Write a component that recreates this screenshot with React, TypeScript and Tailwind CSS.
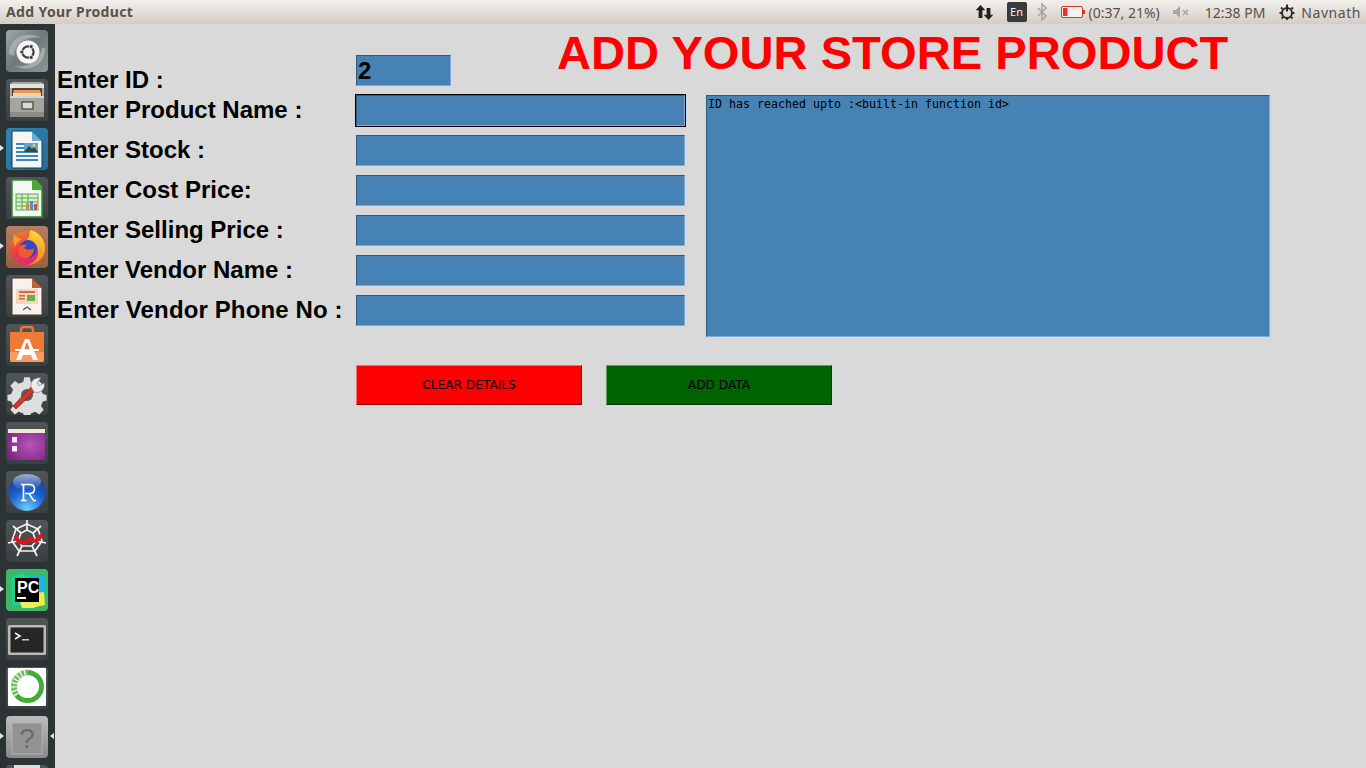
import React from "react";

const paper = "M6 3h20l10 10v27H6z";

function Tile({ bg, children, pip, pipR }: { bg: string; children: React.ReactNode; pip?: boolean; pipR?: boolean }) {
  return (
    <div className={`relative w-[42px] h-[42px] shrink-0 rounded-[4px] ${bg}`}>
      <svg viewBox="0 0 42 42" width="42" height="42" className="block">{children}</svg>
      {pip && <span className="absolute left-[-6px] top-[17px] w-0 h-0 border-y-[3.5px] border-y-transparent border-l-[4px] border-l-[#e6e6e6]" />}
      {pipR && <span className="absolute right-[-6px] top-[17px] w-0 h-0 border-y-[3.5px] border-y-transparent border-r-[4px] border-r-[#e6e6e6]" />}
    </div>
  );
}

const darkTile = "bg-gradient-to-b from-[#505657] to-[#3a4041]";

function Dock() {
  return (
    <aside className="w-[55px] shrink-0 bg-[#2c3335] pt-[6px] pl-[6px] flex flex-col gap-[7px] overflow-hidden">
      <Tile bg="bg-gradient-to-br from-[#a0a8a8] via-[#6f797a] to-[#8f9898]">
        <path d="M3 24C3 8 20 0 36 8 24 6 9 10 8 26z" fill="#b9bfbf" opacity="0.6" />
        <path d="M39 18c1 16-15 25-31 18 12 2 26-3 28-18z" fill="#c6cbcb" opacity="0.55" />
        <circle cx="22" cy="22" r="11.5" fill="#f5f5f5" />
        <circle cx="22" cy="22" r="5.6" fill="none" stroke="#3b3b3b" strokeWidth="2.2" />
        <g fill="#3b3b3b" stroke="#f5f5f5" strokeWidth="0.8">
          <circle cx="15.8" cy="22" r="2" />
          <circle cx="25.2" cy="16.6" r="2" />
          <circle cx="25.2" cy="27.4" r="2" />
        </g>
      </Tile>
      <Tile bg={darkTile}>
        <path d="M4 7q0-4 4-4h26q4 0 4 4v31H4z" fill="#a9a9a6" />
        <rect x="4" y="5" width="34" height="4" fill="#e2e2de" />
        <path d="M6 9h30v8H6z" fill="#54453a" />
        <path d="M8 11h26l1 4H7z" fill="#e59a5c" />
        <path d="M7 14h28v3H7z" fill="#f6d3ad" />
        <rect x="4" y="17" width="34" height="21" fill="#a5a5a2" />
        <rect x="4" y="17" width="34" height="2" fill="#d4d4d0" />
        <rect x="4" y="33" width="34" height="5" fill="#8b8b88" />
        <rect x="16" y="23" width="11" height="7" fill="#d9d9d6" stroke="#4a4a4a" strokeWidth="1.3" />
      </Tile>
      <Tile bg="bg-gradient-to-br from-[#2f86b5] to-[#276b95]" pip>
        <path d={paper} fill="#f5f5f5" stroke="#16384f" strokeWidth="1" />
        <path d="M26 3v10h10z" fill="#6fabd0" />
        <rect x="10" y="15" width="12" height="2" fill="#3e87b8" />
        <rect x="10" y="19" width="22" height="2" fill="#3e87b8" />
        <rect x="10" y="23" width="22" height="2" fill="#3e87b8" />
        <rect x="10" y="27" width="22" height="2" fill="#3e87b8" />
        <rect x="10" y="31" width="22" height="2" fill="#3e87b8" />
        <rect x="18" y="15" width="14" height="9" fill="#5ba6d6" />
        <path d="M18 24l5-6 3 3 2-2 4 5z" fill="#3b4a2c" />
        <circle cx="28" cy="17.5" r="1.4" fill="#f2d24b" />
      </Tile>
      <Tile bg={darkTile}>
        <path d={paper} fill="#f6f6f4" stroke="#2f8f2f" strokeWidth="1.5" />
        <path d="M26 3h4l6 6v4H26z" fill="#4aa83a" />
        <g fill="none" stroke="#58a84e" strokeWidth="1">
          <rect x="10" y="17" width="22" height="16" fill="#d9efc9" />
          <path d="M10 21h22M10 25h22M10 29h22M16 17v16M22 17v16" />
        </g>
        <rect x="20" y="26" width="3" height="7" fill="#e0883a" />
        <rect x="24" y="24" width="3" height="9" fill="#4a90c9" />
        <rect x="28" y="27" width="3" height="6" fill="#c9544a" />
      </Tile>
      <Tile bg="bg-gradient-to-b from-[#b87e60] to-[#9c5d40]" pip>
        <defs>
          <linearGradient id="ffx" x1="0" y1="0" x2="0.4" y2="1">
            <stop offset="0" stopColor="#f7872a" />
            <stop offset="0.6" stopColor="#ec3d3c" />
            <stop offset="1" stopColor="#e02a7a" />
          </linearGradient>
          <linearGradient id="ffy" x1="0.6" y1="0" x2="0.5" y2="1">
            <stop offset="0" stopColor="#ffd83a" />
            <stop offset="1" stopColor="#f9801f" />
          </linearGradient>
        </defs>
        <circle cx="21" cy="22" r="17" fill="url(#ffx)" />
        <path d="M24 4c8 1 15 9 15 18 0 10-8 17-18 17 8-2 12-8 11-15-1-6-6-10-11-10 2-3 3-6 3-10z" fill="url(#ffy)" />
        <circle cx="22" cy="23" r="9" fill="#3646c4" />
        <path d="M13 21c2-3 6-3 8-2l-3 3c3 2 7 2 10 0 0 7-5 11-10 10-5-1-7-7-5-11z" fill="#ee5b2e" />
        <path d="M8 8c2 3 5 5 8 5-3 2-6 4-7 8-2-4-2-9-1-13z" fill="#fa9a2c" />
      </Tile>
      <Tile bg={darkTile}>
        <path d={paper} fill="#f6f3ef" stroke="#5a3320" strokeWidth="1" />
        <path d="M26 3v10h10z" fill="#b8663a" />
        <rect x="10" y="14" width="22" height="15" fill="#f4d5c2" />
        <rect x="13" y="16" width="16" height="2" fill="#d96b35" />
        <rect x="13" y="20" width="6" height="1.6" fill="#d96b35" />
        <rect x="13" y="23" width="6" height="1.6" fill="#d96b35" />
        <rect x="21" y="20" width="8" height="6" fill="#6eaa4e" />
        <path d="M17 35l4-3 4 3" fill="none" stroke="#555" strokeWidth="1.2" />
      </Tile>
      <Tile bg={darkTile}>
        <path d="M4 8h34v28q0 2-2 2H6q-2 0-2-2z" fill="#ef7a36" />
        <path d="M4 28h34v8q0 2-2 2H6q-2 0-2-2z" fill="#f49a62" />
        <path d="M15 9V6q0-3 3-3h6q3 0 3 3v3" fill="none" stroke="#e8743a" strokeWidth="2.5" />
        <path d="M10 36l9-21h4l9 21h-5l-2-5H17l-2 5z" fill="#fff" />
        <path d="M9 25h24v2H9z" fill="#fff" />
        <path d="M20.4 19h1.2l2 6h-5.2z" fill="#ef7a36" />
      </Tile>
      <Tile bg={darkTile}>
        <path d="M18 3h6l1 5 5 2 4-3 5 5-3 4 2 5 4 1v6l-4 1-2 5 3 4-5 5-4-3-5 2-1 4h-6l-1-4-5-2-4 3-5-5 3-4-2-5-4-1v-6l4-1 2-5-3-4 5-5 4 3 5-2z" transform="translate(1.5 1.5) scale(0.93)" fill="#dedede" />
        <circle cx="21" cy="22" r="6" fill="#5a5f60" />
        <path d="M7 33l3 3 20-19-4-4z" fill="#d1352b" stroke="#8c1f19" strokeWidth="0.8" strokeLinejoin="round" />
        <path d="M25 14c-1-6 4-10 10-9l-4 5 2 3 5-3c2 6-4 11-10 9z" fill="#ececec" stroke="#777" strokeWidth="0.6" />
      </Tile>
      <Tile bg={darkTile}>
        <defs>
          <radialGradient id="prp" cx="0.6" cy="0.5" r="0.7">
            <stop offset="0" stopColor="#b556b8" />
            <stop offset="1" stopColor="#7e2384" />
          </radialGradient>
        </defs>
        <rect x="2" y="7" width="37" height="31" rx="2" fill="url(#prp)" />
        <rect x="2" y="7" width="37" height="4" fill="#efe9d2" />
        <rect x="6" y="15" width="5" height="5.5" fill="#eee" />
        <rect x="6" y="24" width="5" height="5.5" fill="#eee" />
      </Tile>
      <Tile bg={darkTile}>
        <defs>
          <radialGradient id="rball" cx="0.5" cy="0.95" r="0.9">
            <stop offset="0" stopColor="#6cd0f8" />
            <stop offset="0.55" stopColor="#1b62d0" />
            <stop offset="1" stopColor="#123c9a" />
          </radialGradient>
          <linearGradient id="rshine" x1="0" y1="0" x2="0" y2="1">
            <stop offset="0" stopColor="#fff" stopOpacity="0.6" />
            <stop offset="1" stopColor="#fff" stopOpacity="0" />
          </linearGradient>
        </defs>
        <circle cx="21" cy="21.5" r="18.5" fill="url(#rball)" />
        <ellipse cx="21" cy="11" rx="14" ry="8" fill="url(#rshine)" />
        <path d="M15 13.5h8.5q5 0 5 4.5t-5 4.5h-4.5M17.5 13.5v16M15 29.5h5.5M23 22.5l4.5 7h2.5" fill="none" stroke="#fff" strokeWidth="1.6" />
      </Tile>
      <Tile bg={darkTile}>
        <g fill="none" stroke="#f2f2f2" strokeWidth="1.7" transform="translate(0 -3)">
          <path d="M21 7l11 5 4 12-7 10H13L6 24l4-12z" />
          <path d="M21 13l6 3 3 8-4 5h-10l-4-5 3-8z" />
          <path d="M21 3v10M35 9l-8 7M40 26l-10-2M31 39l-5-10M11 39l5-10M2 26l10-2M7 9l8 7" />
        </g>
        <path d="M10 17c3 8 9 6 12 3s6 3 9 0l4-4" fill="none" stroke="#e3131c" strokeWidth="4" strokeLinecap="round" />
      </Tile>
      <Tile bg="bg-[#3cb868]" pip>
        <path d="M5 8l12-4 8 5-8 28-11-1z" fill="#21d08a" />
        <path d="M22 5l17 3v16l-7 0z" fill="#15b8e6" />
        <path d="M28 24l10-1 1 13-14 3z" fill="#f3e84a" />
        <path d="M14 33h18l-4 6-12 0z" fill="#e9ee5c" />
        <rect x="9" y="9" width="24" height="24" fill="#000" />
        <text x="11" y="24" fontFamily="'Liberation Sans', sans-serif" fontWeight="700" fontSize="16" fill="#fff">PC</text>
        <rect x="11" y="28" width="9" height="2" fill="#fff" />
      </Tile>
      <Tile bg={darkTile}>
        <rect x="2" y="7" width="38" height="30" rx="1.5" fill="#b9b9b5" />
        <rect x="4.5" y="9.5" width="33" height="25" fill="#272525" />
        <path d="M9 15l5 3-5 3" fill="none" stroke="#eee" strokeWidth="1.6" />
        <rect x="16" y="21" width="7" height="1.5" fill="#ccc" />
      </Tile>
      <Tile bg={darkTile}>
        <rect x="2" y="1" width="38" height="38" rx="1" fill="#fff" />
        <circle cx="21.5" cy="19.5" r="14" fill="none" stroke="#42ac35" strokeWidth="5" />
        <path d="M22 5.5A14 14 0 0 0 11 28" fill="none" stroke="#fff" strokeWidth="5.4" />
        <path d="M22 5.5A14 14 0 0 0 11 28" fill="none" stroke="#6fbd62" strokeWidth="5.6" strokeDasharray="2.6 1.2" />
      </Tile>
      <Tile bg="bg-gradient-to-b from-[#bcbcbc] to-[#8a8a8a]" pip pipR>
        <rect x="6" y="7" width="30" height="31" fill="#939393" stroke="#b1b1b1" strokeWidth="1" />
        <text x="21" y="32" textAnchor="middle" fontFamily="'Liberation Sans', sans-serif" fontSize="28" fill="#6b6b6b">?</text>
      </Tile>
      <Tile bg={darkTile}>
        <path d="M8 0h26v3H8z" fill="#ddd" />
      </Tile>
    </aside>
  );
}

function TopBar() {
  return (
    <header className="h-[24px] shrink-0 flex items-center justify-between bg-gradient-to-b from-[#f3f0ec] to-[#d3cdc6] pl-[6px] pr-[5px] font-['Noto_Sans',sans-serif] text-[14px] text-[#55514d]">
      <span className="font-bold text-[#5a5148] text-[14px] tracking-[0.36px] mt-[-1px]">Add Your Product</span>
      <div className="flex items-center">
        <svg width="19" height="18" viewBox="0 0 18 18" className="mr-[13px]" fill="#222">
          <path d="M5 2l4.8 5.2H6.9V15H3.1V7.2H.2z" />
          <path d="M13 17l-4.8-5.2h2.9V5h3.8v6.8h2.9z" />
        </svg>
        <span className="w-[20px] h-[20px] rounded-[2px] bg-[#3a3a3a] text-[#f2f2f2] text-[11px] flex items-center justify-center mr-[9px]">En</span>
        <svg width="12" height="18" viewBox="0 0 12 18" className="mr-[13px]" fill="none" stroke="#a9a6a2" strokeWidth="1.6">
          <path d="M2 5l8 8-4 4V1l4 4-8 8" />
        </svg>
        <svg width="25" height="12" viewBox="0 0 25 12" className="mr-[3px]">
          <rect x="0.5" y="0.5" width="21" height="11" rx="1.5" fill="#f4f1ee" stroke="#d8352c" />
          <rect x="2" y="2" width="4.5" height="8" fill="#e0352b" />
          <rect x="22" y="4" width="2" height="4" fill="#d8352c" />
        </svg>
        <span className="mr-[12px]">(0:37, 21%)</span>
        <svg width="20" height="14" viewBox="0 0 20 14" className="mr-[13px]" fill="#a9a6a2">
          <path d="M1 5h3l4-4v12l-4-4H1z" />
          <path d="M11 5l5 5M16 5l-5 5" stroke="#a9a6a2" strokeWidth="1.6" />
        </svg>
        <span className="mr-[13px]">12:38 PM</span>
        <svg width="18" height="18" viewBox="0 0 18 18" className="mr-[5px]" fill="none" stroke="#2b2b2b">
          <circle cx="9" cy="10" r="5" strokeWidth="2" />
          <path d="M9 1.5v7" strokeWidth="2" />
          <path d="M3 4.5l1.5 1.5M15 4.5L13.5 6M1.5 10h2M14.5 10h2M3.5 15.5L5 14M14.5 15.5L13 14M9 15v2" strokeWidth="1.8" />
        </svg>
        <span className="tracking-[0.55px]">Navnath</span>
      </div>
    </header>
  );
}

const bevel = "bg-[#4682b4] border border-t-[#2f5a7e] border-l-[#2f5a7e] border-b-[#7fa9e0] border-r-[#7fa9e0]";
const labelText = "font-['Liberation_Sans',Arial,sans-serif] font-bold text-[24px] text-black leading-[29px] whitespace-nowrap";

function Row({ label, focused, wide }: { label: string; focused?: boolean; wide?: boolean }) {
  return (
    <div className="flex h-[31px]">
      <span className={`w-[299px] ${labelText} ${wide ? "tracking-[0.13px]" : ""}`}>{label}</span>
      <div className={`w-[329px] h-[31px] ${bevel} ${focused ? "outline outline-1 outline-black" : ""}`} />
    </div>
  );
}

export default function App() {
  const rows = ["Enter Product Name :", "Enter Stock :", "Enter Cost Price:", "Enter Selling Price :", "Enter Vendor Name :", "Enter Vendor Phone No :"];
  return (
    <div className="w-[1366px] h-[768px] overflow-hidden flex flex-col bg-[#d9d9d9]">
      <TopBar />
      <div className="flex flex-1 min-h-0">
        <Dock />
        <main className="flex-1 pl-[2px]">
          <div className="flex h-[71px] items-start">
            <span className={`w-[299px] mt-[41px] ${labelText}`}>Enter ID :</span>
            <div className={`w-[95px] h-[31px] mt-[31px] pl-[1px] ${bevel} font-['Liberation_Sans',Arial,sans-serif] font-bold text-[24px] leading-[29px] text-black`}>2</div>
            <h1 className="ml-[106px] mt-[2px] font-['Liberation_Sans',Arial,sans-serif] font-bold text-[47.15px] leading-[54px] text-[#ff0000] whitespace-nowrap">ADD YOUR STORE PRODUCT</h1>
          </div>
          <div className="flex items-start">
            <div className="flex flex-col gap-[9px]">
              {rows.map((r, i) => <Row key={r} label={r} focused={i === 0} wide={i === 5} />)}
            </div>
            <div className={`ml-[21px] w-[564px] h-[242px] pl-[1px] pt-[1px] ${bevel} font-['DejaVu_Sans_Mono',monospace] text-[11.63px] leading-[15px] text-black whitespace-pre`}>ID has reached upto :&lt;built-in function id&gt;</div>
          </div>
          <div className="flex gap-[24px] mt-[28px] ml-[299px]">
            <button className="w-[226px] h-[40px] bg-[#ff0000] border border-t-[#f56a6a] border-l-[#f56a6a] border-b-[#8f0000] border-r-[#8f0000] font-['DejaVu_Sans',sans-serif] text-[12.2px] text-black">CLEAR DETAILS</button>
            <button className="w-[226px] h-[40px] bg-[#006400] border border-t-[#5f9f5f] border-l-[#5f9f5f] border-b-[#003a00] border-r-[#003a00] font-['DejaVu_Sans',sans-serif] text-[12.2px] text-black">ADD DATA</button>
          </div>
        </main>
      </div>
    </div>
  );
}
